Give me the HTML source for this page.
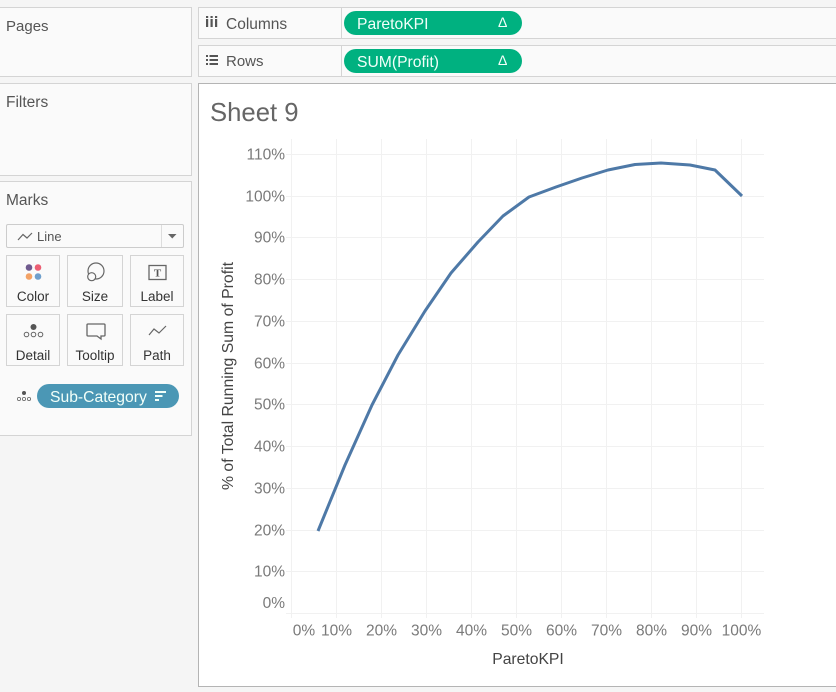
<!DOCTYPE html>
<html><head><meta charset="utf-8"><style>
html,body{margin:0;padding:0}
body{width:836px;height:692px;background:#f5f5f5;position:relative;overflow:hidden;font-family:"Liberation Sans",sans-serif;color:#444}
.p{position:absolute;background:#fafafa;border:1px solid #d4d4d4;box-sizing:border-box}
.t{position:absolute;white-space:nowrap;line-height:18px}
.card{position:absolute;width:54px;height:52px;border:1px solid #d4d4d4;box-sizing:border-box;background:#fafafa}
.card span{position:absolute;left:0;right:0;text-align:center;top:33px;font-size:13.500px;line-height:16px;color:#333}
.card svg{position:absolute;left:0;top:0}
.pill{position:absolute;height:24px;border-radius:12px;color:#f2fff9;font-size:15.700px;line-height:27px}
.d{position:absolute;left:154px;top:-1px;font-size:14px;line-height:25px}
</style></head><body>
<div class="p" style="left:-2px;top:7px;width:194px;height:70px"></div>
<div class="t" style="left:6px;top:18px;font-size:15px;color:#555">Pages</div>
<div class="p" style="left:-2px;top:83px;width:194px;height:93px"></div>
<div class="t" style="left:6px;top:94px;font-size:15.500px;color:#555">Filters</div>
<div class="p" style="left:-2px;top:181px;width:194px;height:255px"></div>
<div class="t" style="left:6px;top:192px;font-size:15.500px;color:#555">Marks</div>

<div style="position:absolute;left:6px;top:224px;width:178px;height:24px;border:1px solid #ccc;box-sizing:border-box;border-radius:2px;background:#fafafa"></div>
<div style="position:absolute;left:161px;top:225px;width:1px;height:22px;background:#ddd"></div>
<svg style="position:absolute;left:168px;top:234px" width="9" height="5"><path d="M0 0H8.500L4.250 4.500Z" fill="#666"/></svg>
<svg style="position:absolute;left:17px;top:230px" width="18" height="12"><path d="M1 10L6 4.500L10 8L15 3" fill="none" stroke="#666" stroke-width="1.200"/></svg>
<div class="t" style="left:37px;top:228px;font-size:13px;color:#555">Line</div>

<div class="card" style="left:6px;top:255px"><svg width="54" height="30"><circle cx="22" cy="11.500" r="3.300" fill="#6f5a8e"/><circle cx="31" cy="11.500" r="3.300" fill="#ec5f74"/><circle cx="22" cy="20.500" r="3.300" fill="#f3a266"/><circle cx="31" cy="20.500" r="3.300" fill="#6f9fcc"/></svg><span>Color</span></div>
<div class="card" style="left:67px;top:255px;width:56px"><svg width="54" height="30" fill="none" stroke="#666" stroke-width="1.200"><circle cx="28" cy="15" r="8"/><circle cx="23.700" cy="20.700" r="4" fill="#fafafa"/></svg><span>Size</span></div>
<div class="card" style="left:130px;top:255px"><svg width="54" height="30"><rect x="18" y="9.500" width="17" height="14" fill="none" stroke="#666" stroke-width="1.300"/><text x="26.500" y="20.500" font-size="11" font-weight="bold" text-anchor="middle" font-family="Liberation Serif" fill="#555">T</text></svg><span>Label</span></div>
<div class="card" style="left:6px;top:314px"><svg width="54" height="30"><circle cx="26.500" cy="12" r="3" fill="#555"/><g fill="none" stroke="#666" stroke-width="1"><circle cx="19.500" cy="19.500" r="2.300"/><circle cx="26.500" cy="19.500" r="2.300"/><circle cx="33.500" cy="19.500" r="2.300"/></g></svg><span>Detail</span></div>
<div class="card" style="left:67px;top:314px;width:56px"><svg width="54" height="30"><path d="M20 9H36Q37 9 37 10V20Q37 21 36 21H33V24L29 21H20Q19 21 19 20V10Q19 9 20 9Z" fill="none" stroke="#666" stroke-width="1.300"/></svg><span>Tooltip</span></div>
<div class="card" style="left:130px;top:314px"><svg width="54" height="30"><path d="M18 20L23 14L28 18L35 11" fill="none" stroke="#666" stroke-width="1.200"/></svg><span>Path</span></div>

<svg style="position:absolute;left:16px;top:390px" width="16" height="14"><circle cx="8" cy="3" r="2" fill="#555"/><g fill="none" stroke="#666" stroke-width=".8"><circle cx="3" cy="9" r="1.600"/><circle cx="8" cy="9" r="1.600"/><circle cx="13" cy="9" r="1.600"/></g></svg>
<div class="pill" style="left:37px;top:384px;width:142px;background:#4b97b5"><span style="position:absolute;left:13px">Sub-Category</span>
<svg style="position:absolute;left:118px;top:7px" width="12" height="11" fill="#f2fff9"><rect x="0" y="0" width="11" height="2"/><rect x="0" y="4" width="7.500" height="2"/><rect x="0" y="8" width="4" height="2"/></svg></div>

<div class="p" style="left:198px;top:7px;width:640px;height:32px"></div>
<div style="position:absolute;left:341px;top:8px;width:1px;height:30px;background:#d4d4d4"></div>
<svg style="position:absolute;left:206px;top:16px" width="12" height="12" fill="#555"><rect x="0" y="0" width="2.200" height="2"/><rect x="0" y="3" width="2.200" height="8"/><rect x="4.500" y="0" width="2.200" height="2"/><rect x="4.500" y="3" width="2.200" height="8"/><rect x="9" y="0" width="2.200" height="2"/><rect x="9" y="3" width="2.200" height="8"/></svg>
<div class="t" style="left:226px;top:16px;font-size:15.500px;color:#555">Columns</div>
<div class="pill" style="left:344px;top:11px;width:178px;background:#00b180"><span style="position:absolute;left:13px">ParetoKPI</span><span class="d">&#916;</span></div>

<div class="p" style="left:198px;top:45px;width:640px;height:32px"></div>
<div style="position:absolute;left:341px;top:46px;width:1px;height:30px;background:#d4d4d4"></div>
<svg style="position:absolute;left:206px;top:55px" width="13" height="11" fill="#555"><rect x="0" y="0" width="2" height="2"/><rect x="3.500" y="0" width="8.500" height="2"/><rect x="0" y="4" width="2" height="2"/><rect x="3.500" y="4" width="8.500" height="2"/><rect x="0" y="8" width="2" height="2"/><rect x="3.500" y="8" width="8.500" height="2"/></svg>
<div class="t" style="left:226px;top:53px;font-size:15px;color:#555">Rows</div>
<div class="pill" style="left:344px;top:49px;width:178px;background:#00b180"><span style="position:absolute;left:13px">SUM(Profit)</span><span class="d">&#916;</span></div>

<div style="position:absolute;left:198px;top:83px;width:640px;height:604px;background:#fff;border:1px solid #b4b4b4;box-sizing:border-box"></div>
<div class="t" style="left:210px;top:98px;font-size:25.700px;line-height:30px;color:#666">Sheet 9</div>

<svg style="position:absolute;left:0;top:0" width="836" height="692" font-family="Liberation Sans" font-size="15.500" fill="#7a7a7a">
<g stroke="#f1f1f1" stroke-width="1" fill="none">
<path d="M291.500 139V618M336.500 139V618M381.500 139V618M426.500 139V618M471.500 139V618M516.500 139V618M561.500 139V618M606.500 139V618M651.500 139V618M696.500 139V618M741.500 139V618"/>
<path d="M286 154.500H764M286 196.500H764M286 237.500H764M286 279.500H764M286 321.500H764M286 363.500H764M286 404.500H764M286 446.500H764M286 488.500H764M286 530.500H764M286 571.500H764M286 613.500H764"/>
</g>
<g text-anchor="end">
<text x="285" y="159.500">110%</text><text x="285" y="201.500">100%</text><text x="285" y="242.500">90%</text><text x="285" y="284.500">80%</text><text x="285" y="326.500">70%</text><text x="285" y="368.500">60%</text><text x="285" y="409.500">50%</text><text x="285" y="451.500">40%</text><text x="285" y="493.500">30%</text><text x="285" y="535.500">20%</text><text x="285" y="576.500">10%</text><text x="285" y="608">0%</text>
</g>
<g text-anchor="middle">
<text x="304" y="635.500">0%</text><text x="336.500" y="635.500">10%</text><text x="381.500" y="635.500">20%</text><text x="426.500" y="635.500">30%</text><text x="471.500" y="635.500">40%</text><text x="516.500" y="635.500">50%</text><text x="561.500" y="635.500">60%</text><text x="606.500" y="635.500">70%</text><text x="651.500" y="635.500">80%</text><text x="696.500" y="635.500">90%</text><text x="741.500" y="635.500">100%</text>
</g>
<text x="528" y="664" text-anchor="middle" font-size="15.700" fill="#444">ParetoKPI</text>
<text transform="translate(233 376) rotate(-90)" text-anchor="middle" font-size="15.800" fill="#444">% of Total Running Sum of Profit</text>
<path d="M318 531L345 465L372 405L398 355L425 311L451 273L478 242L503 216L529 197L556 187L582 178L608 170L635 164.500L661 163L690 165L715 170L742 196" fill="none" stroke="#4e79a7" stroke-width="3" stroke-linejoin="round"/>
</svg>
</body></html>
